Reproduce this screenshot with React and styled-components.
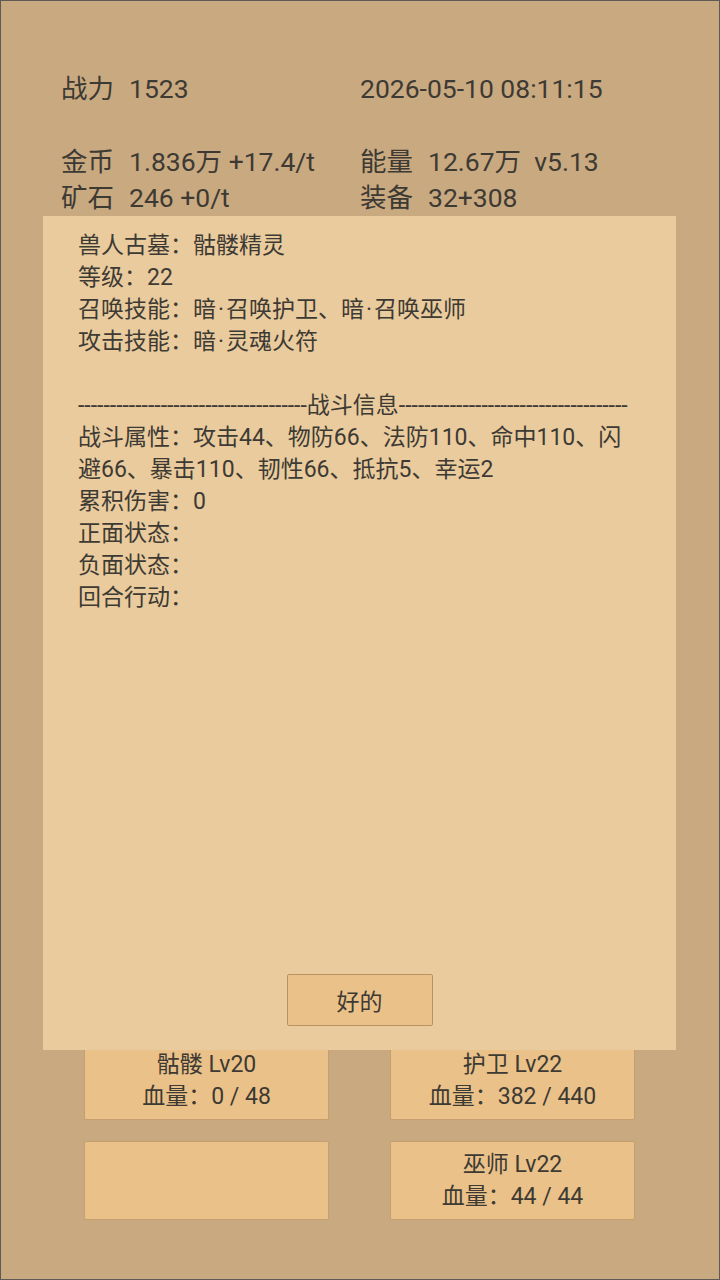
import React from 'react';
import styled, { createGlobalStyle } from 'styled-components';

const GlobalStyle = createGlobalStyle`
  html, body {
    margin: 0;
    padding: 0;
  }
  body {
    font-family: Roboto, "Noto Sans CJK SC", sans-serif;
    color: #3d3a34;
  }
`;

const Screen = styled.div`
  position: relative;
  box-sizing: border-box;
  width: 720px;
  height: 1280px;
  background: #c9a980;
  border: 1px solid #5d5a58;
  overflow: hidden;
`;

const Header = styled.div`
  display: grid;
  grid-template-columns: 299px 1fr;
  padding: 70px 0 0 60px;
  font-size: 26.5px;
  line-height: 36px;
`;

const Stat = styled.div`
  display: flex;
  gap: 15px;
  margin-bottom: ${(p) => p.$spaced ? '37px' : '0'};
`;

const Cards = styled.div`
  display: grid;
  grid-template-columns: 245px 245px;
  column-gap: 61px;
  row-gap: 21px;
  padding: 0 0 0 83px;
  margin-top: 825px;
`;

const Card = styled.div`
  box-sizing: border-box;
  height: 79px;
  background: #eac188;
  border: 1px solid #c59f6d;
  border-radius: 2px;
  display: flex;
  flex-direction: column;
  justify-content: center;
  align-items: center;
  font-size: 23px;
  line-height: 32px;
`;

const Dialog = styled.div`
  position: absolute;
  left: 42px;
  top: 215px;
  width: 633px;
  height: 834px;
  box-sizing: border-box;
  background: #eacb9d;
  padding: 14px 35px 0 35px;
  display: flex;
  flex-direction: column;
  font-size: 23px;
  line-height: 32px;
`;

const Line = styled.div`
  height: ${(p) => p.$wrap ? 'auto' : '32px'};
  min-height: 32px;
  white-space: ${(p) => p.$nowrap ? 'nowrap' : 'normal'};
`;

const Dot = styled.span`
  margin: 0 2px;
`;

const OkButton = styled.button`
  align-self: center;
  margin-top: auto;
  margin-bottom: 24px;
  width: 146px;
  height: 52px;
  background: #eac188;
  border: 1px solid #b99263;
  border-radius: 2px;
  font-family: inherit;
  font-size: 23px;
  color: #3d3a34;
`;

const dashesL = '-'.repeat(36);
const dashesR = '-'.repeat(36);

export default function App() {
  return (
    <Screen>
      <GlobalStyle />
      <Header>
        <Stat $spaced><span>战力</span><span>1523</span></Stat>
        <Stat $spaced><span>2026-05-10 08:11:15</span></Stat>
        <Stat><span>金币</span><span>1.836万 +17.4/t</span></Stat>
        <Stat><span>能量</span><span>12.67万&nbsp;&nbsp;v5.13</span></Stat>
        <Stat><span>矿石</span><span>246 +0/t</span></Stat>
        <Stat><span>装备</span><span>32+308</span></Stat>
      </Header>

      <Cards>
        <Card><div>骷髅 Lv20</div><div>血量：0 / 48</div></Card>
        <Card><div>护卫 Lv22</div><div>血量：382 / 440</div></Card>
        <Card />
        <Card><div>巫师 Lv22</div><div>血量：44 / 44</div></Card>
      </Cards>

      <Dialog>
        <Line>兽人古墓：骷髅精灵</Line>
        <Line>等级：22</Line>
        <Line>召唤技能：暗<Dot>·</Dot>召唤护卫、暗<Dot>·</Dot>召唤巫师</Line>
        <Line>攻击技能：暗<Dot>·</Dot>灵魂火符</Line>
        <Line />
        <Line $nowrap>{dashesL}战斗信息{dashesR}</Line>
        <Line $wrap>战斗属性：攻击44、物防66、法防110、命中110、闪避66、暴击110、韧性66、抵抗5、幸运2</Line>
        <Line>累积伤害：0</Line>
        <Line>正面状态：</Line>
        <Line>负面状态：</Line>
        <Line>回合行动：</Line>
        <OkButton>好的</OkButton>
      </Dialog>
    </Screen>
  );
}
